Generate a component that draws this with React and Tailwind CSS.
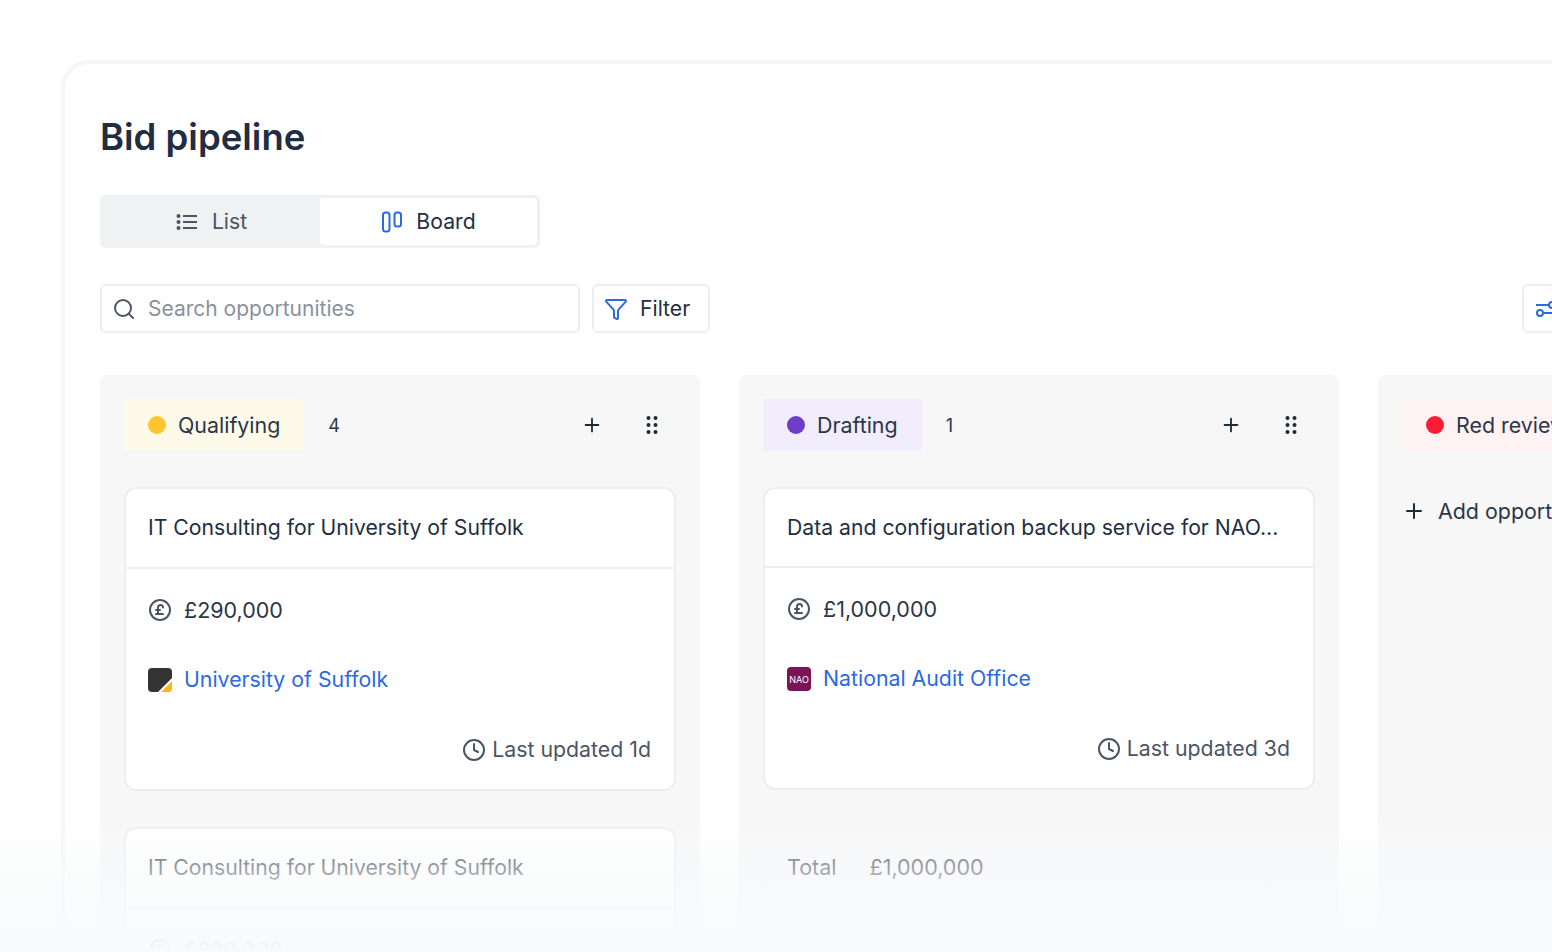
import React from "react";
import { Funnel, Search, CirclePoundSterling, Clock, Plus } from "lucide-react";

const Grip = () => (
  <svg width="14" height="20" viewBox="0 0 14 20" fill="#1f2937">
    {[3, 10, 17].map((y) => (
      <g key={y}>
        <circle cx="3.5" cy={y} r="2" />
        <circle cx="10.5" cy={y} r="2" />
      </g>
    ))}
  </svg>
);

const ListIcon = () => (
  <svg width="22" height="18" viewBox="0 0 22 18" fill="none" stroke="#4b5563" strokeWidth="2">
    <path d="M7 3h14M7 9h14M7 15h14" />
    <g fill="#4b5563" stroke="none">
      <circle cx="2.5" cy="3" r="2" />
      <circle cx="2.5" cy="9" r="2" />
      <circle cx="2.5" cy="15" r="2" />
    </g>
  </svg>
);

const BoardIcon = () => (
  <svg className="ml-[1px]" width="20" height="22" viewBox="0 0 20 22" fill="none" stroke="#2b6ae0" strokeWidth="2">
    <rect x="1" y="1.5" width="6.5" height="19" rx="2.5" />
    <rect x="12.5" y="1.5" width="6.5" height="14" rx="2.5" />
  </svg>
);

const SlidersIcon = () => (
  <svg width="26" height="24" viewBox="0 0 26 24" fill="none" stroke="#2b6ae0" strokeWidth="2">
    <path d="M1 8h13M9 16h17M20 8h6" />
    <circle cx="17" cy="8" r="3" />
    <circle cx="5" cy="16" r="3" />
  </svg>
);

const SuffolkLogo = () => (
  <svg width="24" height="24" viewBox="0 0 24 24">
    <rect width="24" height="24" rx="4" fill="#333333" />
    <path d="M24 10 V20 A4 4 0 0 1 20 24 H10 Z" fill="#ffffff" />
    <path d="M24 13 V20 A4 4 0 0 1 20 24 H13 Z" fill="#fdb913" />
  </svg>
);

const NaoLogo = () => (
  <div className="flex h-6 w-6 items-center justify-center rounded-[4px] bg-[#7a1457] text-[9px] leading-none text-white">NAO</div>
);

function ColumnHeader({ dot, chip, label, count }) {
  return (
    <div className="flex h-[52px] items-center">
      <div className={`flex h-[52px] items-center gap-[12px] rounded-[4px] px-[24px] text-[21.4px] text-[#2b3648] ${chip}`}>
        <span className={`h-[18px] w-[18px] rounded-full ${dot}`} />
        <span>{label}</span>
      </div>
      <span className="ml-[24px] text-[18px] text-[#2b3648]">{count}</span>
      <div className="ml-auto flex items-center gap-[42px] pr-[17px]">
        <Plus size={22} strokeWidth={2} color="#1f2a3c" />
        <Grip />
      </div>
    </div>
  );
}

function Card({ title, amount, logo, org, updated, lineH }) {
  return (
    <div className="rounded-[12px] border-2 border-[#eceef0] bg-white">
      <div className={`flex items-center whitespace-nowrap border-b-2 border-[#eceef0] px-[22px] text-[21.2px] text-[#222e41] ${lineH}`}>{title}</div>
      <div className="flex flex-col px-[22px]">
        <div className="mt-[23px] flex h-[36px] items-center gap-[12px] text-[21.5px] text-[#2b3648]">
          <CirclePoundSterling size={24} strokeWidth={2} color="#4b5563" />
          <span>{amount}</span>
        </div>
        <div className="mt-[34px] flex h-[36px] items-center gap-[12px] text-[21.3px] text-[#2b6ae0]">
          {logo}
          <span>{org}</span>
        </div>
        <div className="mb-[21px] mt-[34px] flex h-[36px] items-center justify-end gap-[6px] pr-[1px] text-[21.3px] text-[#4b5563]">
          <Clock size={24} strokeWidth={2} color="#4b5563" />
          <span>{updated}</span>
        </div>
      </div>
    </div>
  );
}

export default function App() {
  return (
    <div className="relative h-[952px] w-full overflow-hidden bg-white pl-[61px] pt-[60px] font-['Inter',sans-serif]">
      <div className="h-[1000px] w-[1600px] rounded-tl-[28px] border-4 border-[#f5f6f7] bg-white pl-[35px] pt-[47px]">
        <h1 className="text-[36.5px] font-semibold leading-[52px] text-[#202d42]">Bid pipeline</h1>

        <div className="mt-[32px] flex h-[53px] w-[440px] rounded-[6px] border-[3px] border-[#eff1f3] bg-[#eff1f3] text-[21.2px]">
          <div className="flex w-[217px] items-center justify-center gap-[14px] text-[#4b5563]">
            <ListIcon />
            <span>List</span>
          </div>
          <div className="flex flex-1 items-center justify-center gap-[14px] rounded-[4px] bg-white text-[#222e41]">
            <BoardIcon />
            <span>Board</span>
          </div>
        </div>

        <div className="mt-[36px] flex h-[49px] w-[1500px] gap-[12px]">
          <div className="flex w-[480px] shrink-0 items-center gap-[12px] rounded-[6px] border-2 border-[#eceef0] px-[10px] text-[21px] text-[#8a919c]">
            <Search size={24} strokeWidth={2} color="#4b5563" />
            <span>Search opportunities</span>
          </div>
          <div className="flex w-[118px] shrink-0 items-center gap-[12px] rounded-[6px] border-2 border-[#eceef0] pl-[10px] text-[21.2px] text-[#222e41]">
            <Funnel size={24} strokeWidth={2} color="#2b6ae0" />
            <span>Filter</span>
          </div>
          <div className="ml-[800px] flex w-[60px] shrink-0 items-center rounded-[6px] border-2 border-[#eceef0] pl-[11px]">
            <SlidersIcon />
          </div>
        </div>

        <div className="mt-[42px] flex gap-[39px]">
          <div className="h-[640px] w-[600px] shrink-0 rounded-[8px] bg-[#f7f7f8] px-[24px] pt-[24px]">
            <ColumnHeader dot="bg-[#fec52e]" chip="bg-[#fefaea]" label="Qualifying" count="4" />
            <div className="mt-[36px] flex flex-col gap-[36px]">
              <Card lineH="h-[80px]" title="IT Consulting for University of Suffolk" amount="£290,000" logo={<SuffolkLogo />} org="University of Suffolk" updated="Last updated 1d" />
              <Card lineH="h-[80px]" title="IT Consulting for University of Suffolk" amount="£290,000" logo={<SuffolkLogo />} org="University of Suffolk" updated="Last updated 1d" />
            </div>
          </div>

          <div className="h-[640px] w-[600px] shrink-0 rounded-[8px] bg-[#f7f7f8] px-[24px] pt-[24px]">
            <ColumnHeader dot="bg-[#6c3ec9]" chip="bg-[#f1edfc]" label="Drafting" count="1" />
            <div className="mt-[36px]">
              <Card lineH="h-[79px]" title="Data and configuration backup service for NAO..." amount="£1,000,000" logo={<NaoLogo />} org="National Audit Office" updated="Last updated 3d" />
            </div>
            <div className="mt-[61px] flex gap-[33px] pl-[24px] text-[21.5px] text-[#2b3648]">
              <span>Total</span>
              <span>£1,000,000</span>
            </div>
          </div>

          <div className="h-[640px] w-[600px] shrink-0 rounded-[8px] bg-[#f7f7f8] px-[24px] pt-[24px]">
            <ColumnHeader dot="bg-[#fb1d36]" chip="bg-[#fef2f3]" label="Red review" count="0" />
            <div className="mt-[44px] flex items-center gap-[12px] text-[21.4px] text-[#2b3648]">
              <Plus size={24} strokeWidth={2} color="#1f2a3c" />
              <span>Add opportunity</span>
            </div>
          </div>
        </div>
      </div>

      <div className="pointer-events-none absolute inset-x-0 bottom-0 h-[140px] bg-gradient-to-b from-[#f9fafb00] via-[#f9fafbb0] to-[#f9fafb]" />
    </div>
  );
}
